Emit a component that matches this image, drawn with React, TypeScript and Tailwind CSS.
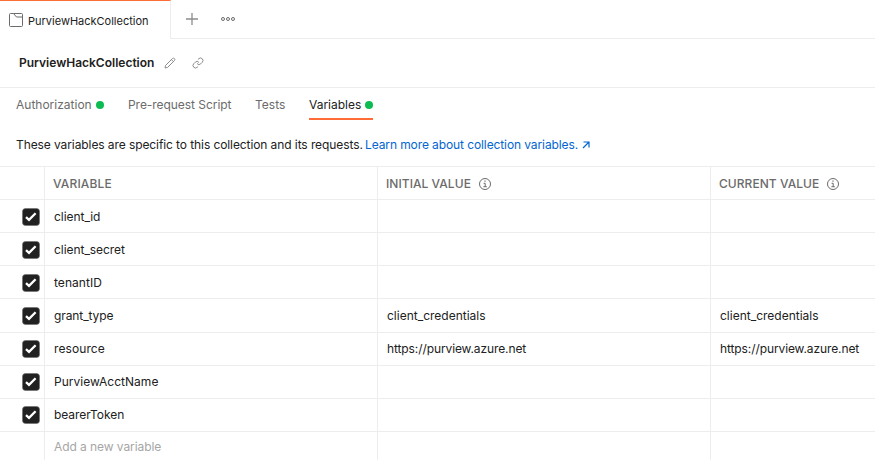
import React from "react";

type Variable = { name: string; value?: string; track: string };

const variables: Variable[] = [
  { name: "client_id", track: "tracking-[-0.05px]" },
  { name: "client_secret", track: "tracking-[-0.05px]" },
  { name: "tenantID", track: "tracking-[0.05px]" },
  { name: "grant_type", value: "client_credentials", track: "tracking-[-0.1px]" },
  { name: "resource", value: "https://purview.azure.net", track: "tracking-[0.1px]" },
  { name: "PurviewAcctName", track: "tracking-[0.02px]" },
  { name: "bearerToken", track: "tracking-[-0.05px]" },
];

const columns = "grid grid-cols-[45px_333px_333px_1fr]";

function CollectionIcon() {
  return (
    <svg width="14" height="14" viewBox="0 0 14 14" fill="none" stroke="#6b6b6b" strokeWidth="1">
      <path d="M1.5.5H4.5L7.5 4H13.5V12.5a1 1 0 0 1-1 1h-11a1 1 0 0 1-1-1v-11a1 1 0 0 1 1-1Z" />
      <path d="M4.5 .5H12.5a1 1 0 0 1 1 1V4" />
    </svg>
  );
}

function InfoIcon() {
  return (
    <svg width="14" height="14" viewBox="0 0 14 14" fill="none" stroke="#6b6b6b">
      <circle cx="7" cy="7" r="5.5" />
      <path d="M5.6 6.3H7.2V9.6M5.4 9.7H8.8" />
      <path d="M6.4 4.2H7.6" strokeWidth="1.2" />
    </svg>
  );
}

function Checkbox() {
  return (
    <svg width="18" height="18" viewBox="0 0 18 18">
      <rect x="0.5" y="0.5" width="17" height="17" rx="3" fill="#212121" stroke="#6b6b6b" strokeWidth="0.6" />
      <path d="M4 9.2 7 11.9 13.6 5.3" fill="none" stroke="#fff" strokeWidth="2.3" />
    </svg>
  );
}

function HeaderCell({ label, track, last }: { label: string; track: string; last?: boolean }) {
  return (
    <div className={`flex items-center border-[#ededed] pt-px pl-2 ${last ? "" : "border-r"}`}>
      <span className={`text-[12px] font-medium ${track}`}>{label}</span>
      {label !== "VARIABLE" && (
        <span className="ml-[7px]">
          <InfoIcon />
        </span>
      )}
    </div>
  );
}

export default function App() {
  return (
    <div className="h-[460px] w-[875px] overflow-hidden bg-white font-['Inter','Liberation_Sans',sans-serif] text-[12px] leading-4 whitespace-nowrap text-[#212121]">
      <div className="flex h-[39px]">
        <div className="flex w-[171px] items-center border-t border-r border-t-[#ff6c37] border-r-[#ededed] pl-[9px]">
          <CollectionIcon />
          <span className="ml-[5px] pt-px text-[11px]">PurviewHackCollection</span>
        </div>
        <div className="flex flex-1 items-center border-b border-[#ededed] pl-[15px]">
          <svg width="12" height="12" viewBox="0 0 12 12" stroke="#8c8c8c" strokeWidth="1.3">
            <path d="M6 0V12M0 6H12" />
          </svg>
          <svg className="ml-[23px]" width="14" height="6" viewBox="0 0 14 6" fill="none" stroke="#6b6b6b">
            <circle cx="2" cy="3" r="1.5" />
            <circle cx="7" cy="3" r="1.5" />
            <circle cx="12" cy="3" r="1.5" />
          </svg>
        </div>
      </div>

      <div className="flex h-12 items-center pl-[19px]">
        <h1 className="w-[136px] text-[12px] font-semibold">PurviewHackCollection</h1>
        <svg className="ml-[9px]" width="12" height="12" viewBox="0 0 12 12" fill="none" stroke="#8c8c8c">
          <path d="M1 11 1.6 8.4 8.5 1.5Q9.4.7 10.4 1.6T10.5 3.5L3.6 10.4ZM7.4 2.6 9.4 4.6" />
        </svg>
        <svg className="ml-4" width="12" height="12" viewBox="0 0 24 24" fill="none" stroke="#8c8c8c" strokeWidth="2">
          <path d="M10 13a5 5 0 0 0 7.54.54l3-3a5 5 0 0 0-7.07-7.07l-1.72 1.71M14 11a5 5 0 0 0-7.54-.54l-3 3a5 5 0 0 0 7.07 7.07l1.71-1.71" />
        </svg>
      </div>

      <nav className="flex h-[33px] items-stretch border-t border-[#ededed] pl-4 text-[#6b6b6b]">
        <div className="flex w-[112px] items-center pt-px">
          <span className="w-[75px]">Authorization</span>
          <span className="ml-[5px] size-2 rounded-full bg-[#0cbb52]" />
        </div>
        <span className="flex w-[127px] items-center pt-px tracking-[-0.05px]">Pre-request Script</span>
        <span className="flex w-[54px] items-center pt-px">Tests</span>
        <div className="flex w-16 items-center border-b-2 border-[#ff6c37] pt-[3px] text-[#212121]">
          <span className="w-[51px]">Variables</span>
          <span className="ml-[5px] size-2 shrink-0 rounded-full bg-[#0cbb52]" />
        </div>
      </nav>

      <div className="flex h-[46px] items-center pl-4 pt-[3px]">
        <span className="w-[349px] tracking-[-0.09px]">These variables are specific to this collection and its requests.</span>
        <a className="flex items-center text-[#0265d2]">
          <span className="w-[213px] tracking-[-0.1px]">Learn more about collection variables.</span>
          <svg className="ml-1" width="8" height="8" viewBox="0 0 8 8" fill="none" stroke="#0265d2" strokeWidth="1.2">
            <path d="M1.5 1H7V6.5M7 1 1 7" />
          </svg>
        </a>
      </div>

      <div className="border-t border-[#ededed]">
        <div className={`${columns} h-[33px] border-b border-[#ededed] text-[#6b6b6b]`}>
          <div className="border-r border-[#ededed]" />
          <HeaderCell label="VARIABLE" track="tracking-[0.15px]" />
          <HeaderCell label="INITIAL VALUE" track="tracking-[0.05px]" />
          <HeaderCell label="CURRENT VALUE" track="tracking-[0.05px]" last />
        </div>
        {variables.map((v) => (
          <div key={v.name} className={`${columns} h-[33.15px] border-b border-[#ededed]`}>
            <div className="flex items-center border-r border-[#ededed] pt-px pl-[22px]">
              <Checkbox />
            </div>
            <div className="flex items-center border-r border-[#ededed] pt-px pl-[9px]">
              <span className={v.track}>{v.name}</span>
            </div>
            <div className="flex items-center border-r border-[#ededed] pt-px pl-[9px]">
              <span className={v.name === "resource" ? "tracking-[-0.1px]" : ""}>{v.value}</span>
            </div>
            <div className="flex items-center pt-px pl-[9px]">
              <span className={v.name === "resource" ? "tracking-[-0.1px]" : ""}>{v.value}</span>
            </div>
          </div>
        ))}
        <div className={`${columns} h-[31px] text-[#a6a6a6]`}>
          <div className="border-r border-[#ededed]" />
          <div className="flex items-center border-r border-[#ededed] pl-[9px] tracking-[-0.07px]">Add a new variable</div>
          <div className="border-r border-[#ededed]" />
        </div>
      </div>
    </div>
  );
}
